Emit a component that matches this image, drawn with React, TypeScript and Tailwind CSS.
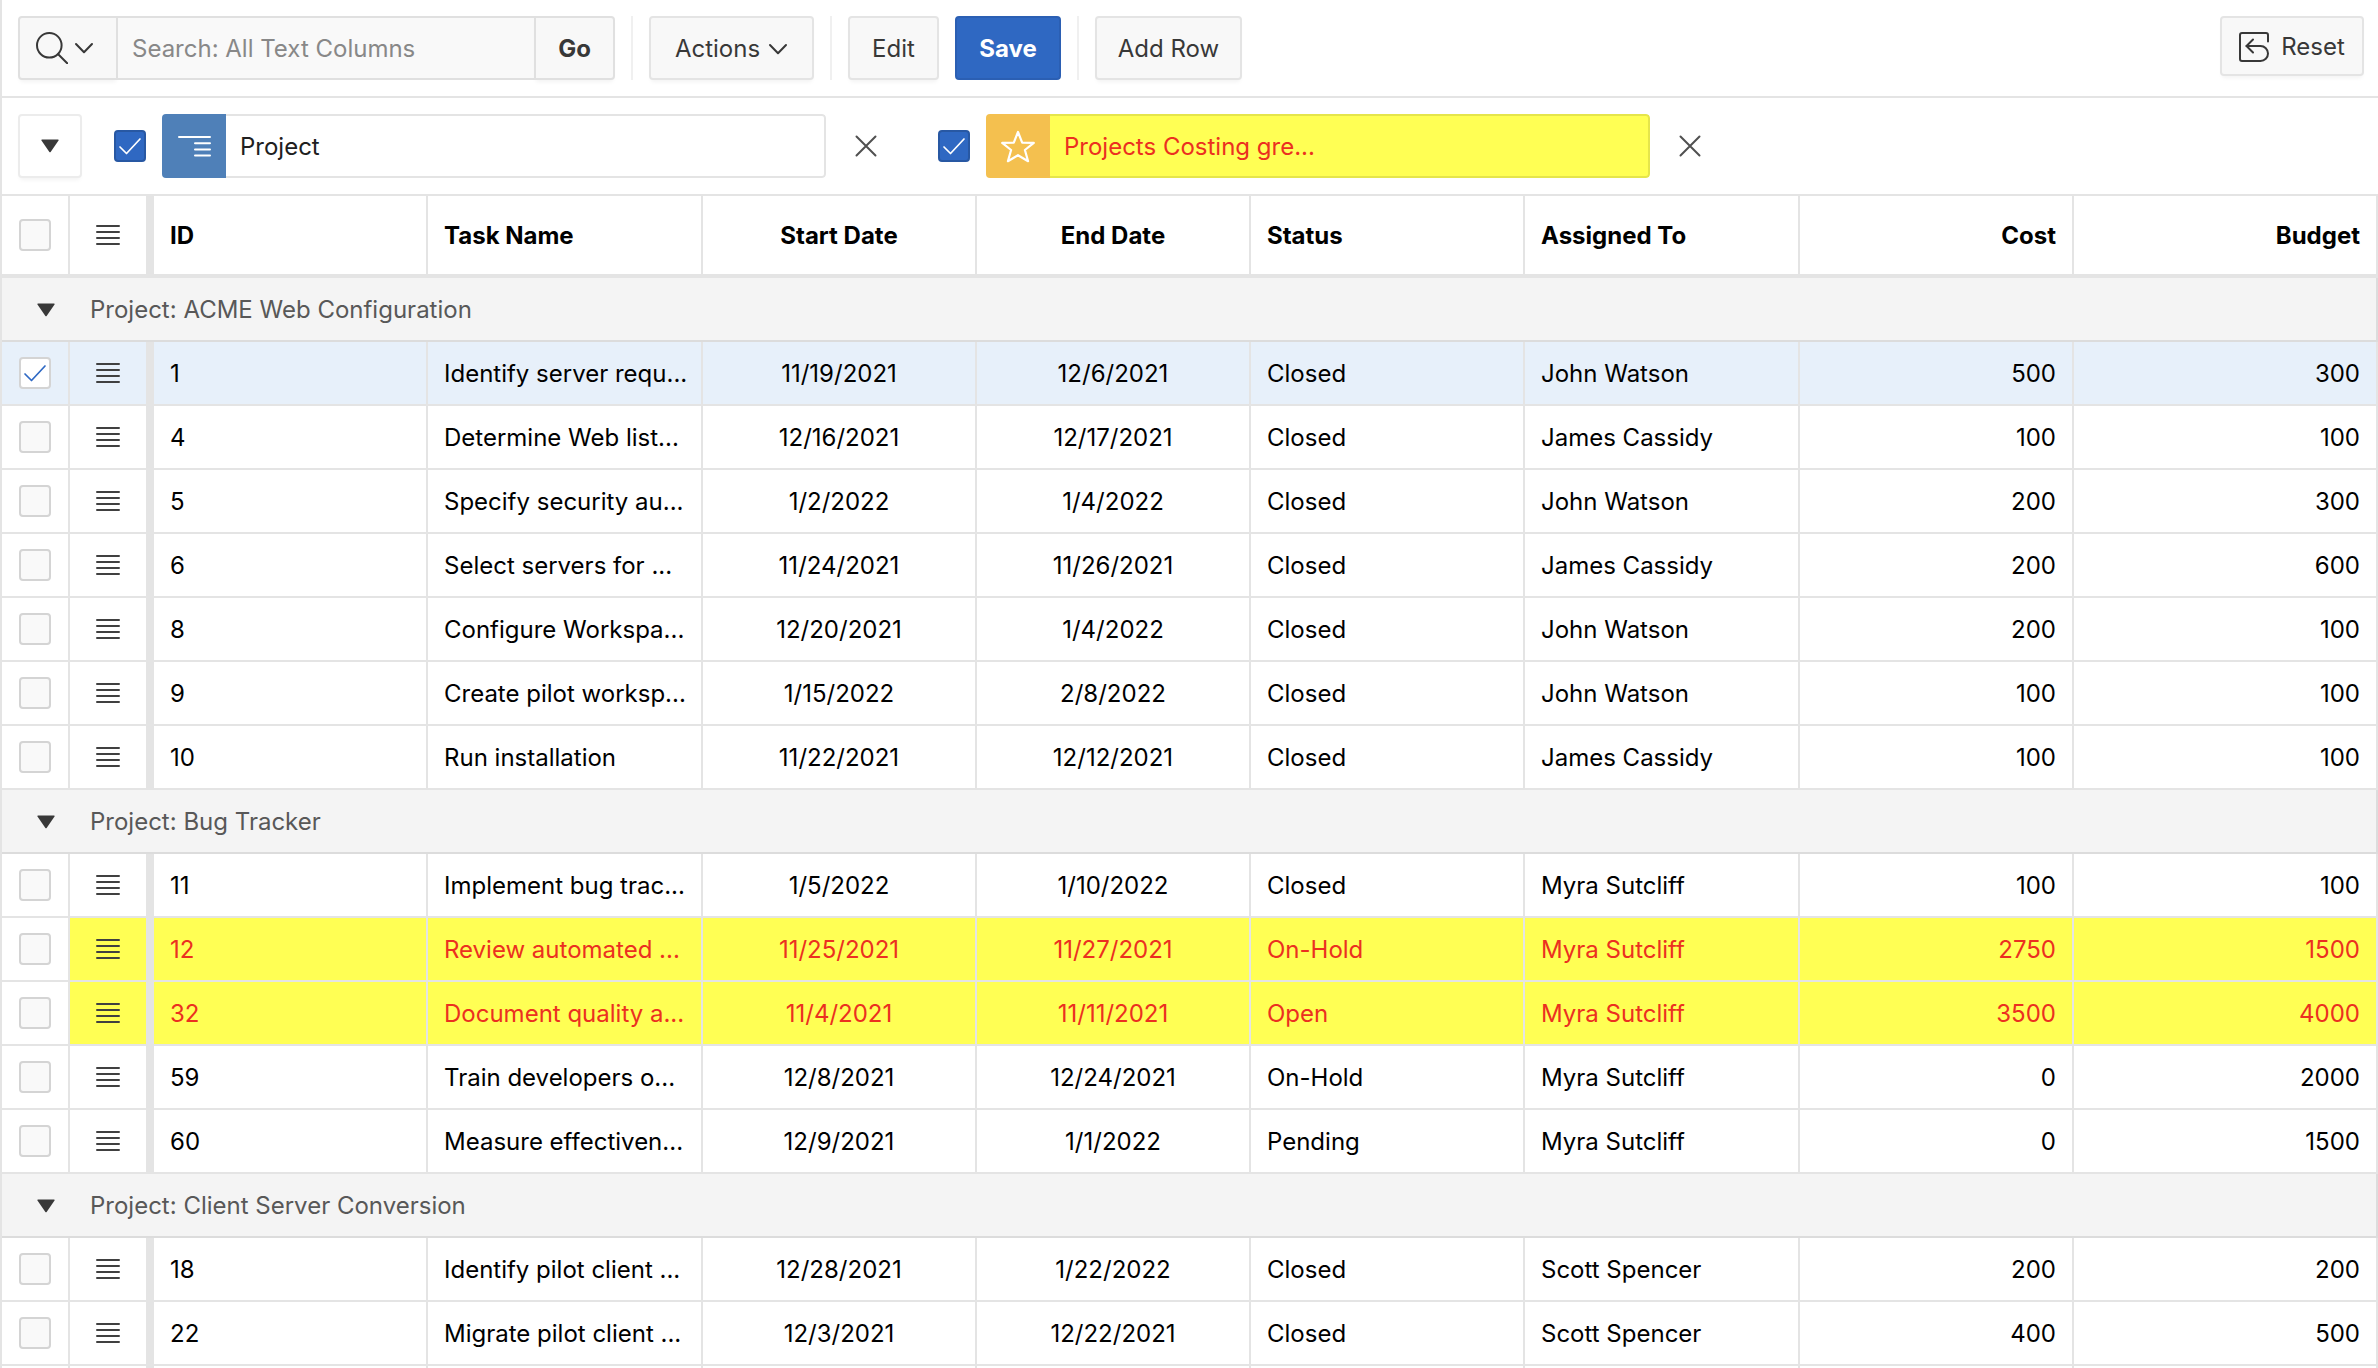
import React from "react";

type Task = {
  id: string;
  name: string;
  start: string;
  end: string;
  status: string;
  assignee: string;
  cost: string;
  budget: string;
  selected?: boolean;
  highlighted?: boolean;
};

const task = (
  id: string,
  name: string,
  start: string,
  end: string,
  status: string,
  assignee: string,
  cost: string,
  budget: string,
  flags: Partial<Task> = {},
): Task => ({ id, name, start, end, status, assignee, cost, budget, ...flags });

const groups: { project: string; tasks: Task[] }[] = [
  {
    project: "ACME Web Configuration",
    tasks: [
      task("1", "Identify server requ...", "11/19/2021", "12/6/2021", "Closed", "John Watson", "500", "300", { selected: true }),
      task("4", "Determine Web list...", "12/16/2021", "12/17/2021", "Closed", "James Cassidy", "100", "100"),
      task("5", "Specify security au...", "1/2/2022", "1/4/2022", "Closed", "John Watson", "200", "300"),
      task("6", "Select servers for ...", "11/24/2021", "11/26/2021", "Closed", "James Cassidy", "200", "600"),
      task("8", "Configure Workspa...", "12/20/2021", "1/4/2022", "Closed", "John Watson", "200", "100"),
      task("9", "Create pilot worksp...", "1/15/2022", "2/8/2022", "Closed", "John Watson", "100", "100"),
      task("10", "Run installation", "11/22/2021", "12/12/2021", "Closed", "James Cassidy", "100", "100"),
    ],
  },
  {
    project: "Bug Tracker",
    tasks: [
      task("11", "Implement bug trac...", "1/5/2022", "1/10/2022", "Closed", "Myra Sutcliff", "100", "100"),
      task("12", "Review automated ...", "11/25/2021", "11/27/2021", "On-Hold", "Myra Sutcliff", "2750", "1500", { highlighted: true }),
      task("32", "Document quality a...", "11/4/2021", "11/11/2021", "Open", "Myra Sutcliff", "3500", "4000", { highlighted: true }),
      task("59", "Train developers o...", "12/8/2021", "12/24/2021", "On-Hold", "Myra Sutcliff", "0", "2000"),
      task("60", "Measure effectiven...", "12/9/2021", "1/1/2022", "Pending", "Myra Sutcliff", "0", "1500"),
    ],
  },
  {
    project: "Client Server Conversion",
    tasks: [
      task("18", "Identify pilot client ...", "12/28/2021", "1/22/2022", "Closed", "Scott Spencer", "200", "200"),
      task("22", "Migrate pilot client ...", "12/3/2021", "12/22/2021", "Closed", "Scott Spencer", "400", "500"),
    ],
  },
];

const columns: { key: keyof Task; title: string; align: string; width: string }[] = [
  { key: "id", title: "ID", align: "text-left", width: "w-[274px]" },
  { key: "name", title: "Task Name", align: "text-left", width: "w-[275px]" },
  { key: "start", title: "Start Date", align: "text-center", width: "w-[274px]" },
  { key: "end", title: "End Date", align: "text-center", width: "w-[274px]" },
  { key: "status", title: "Status", align: "text-left", width: "w-[274px]" },
  { key: "assignee", title: "Assigned To", align: "text-left", width: "w-[275px]" },
  { key: "cost", title: "Cost", align: "text-right", width: "w-[274px]" },
  { key: "budget", title: "Budget", align: "text-right", width: "w-auto" },
];

const buttonStyle =
  "flex h-16 items-center rounded border-2 border-[#e4e4e4] bg-[#f8f8f8] pt-[2px] text-[#383838] shadow-[0_4px_4px_-2px_rgba(0,0,0,0.05)]";

function ChevronDown() {
  return (
    <svg width="20" height="12" viewBox="0 0 20 12" fill="none" stroke="currentColor" strokeWidth="2" strokeLinecap="round" strokeLinejoin="round" aria-hidden="true">
      <path d="M2 2l8 8.200 8-8.200" />
    </svg>
  );
}

function Triangle() {
  return (
    <svg width="18" height="14" viewBox="0 0 18 14" fill="#383838" aria-hidden="true">
      <path d="M1 .5h16a.7.7 0 0 1 .5 1L9.6 13a.8.8 0 0 1-1.2 0L.5 1.500A.7.7 0 0 1 1 .5z" />
    </svg>
  );
}

function Lines() {
  return (
    <svg width="26" height="22" viewBox="0 0 26 22" fill="none" stroke="#404040" strokeWidth="2" strokeLinecap="round" aria-hidden="true">
      <path d="M2 2h22M2 8h22M2 14h22M2 20h22" />
    </svg>
  );
}

function Cross() {
  return (
    <svg width="22" height="22" viewBox="0 0 22 22" fill="none" stroke="#505050" strokeWidth="2" strokeLinecap="round" aria-hidden="true">
      <path d="M1.500 1.500l19 19M20.500 1.500l-19 19" />
    </svg>
  );
}

function Tick({ className }: { className: string }) {
  return (
    <svg className={className} width="24" height="20" viewBox="0 0 24 20" fill="none" stroke="currentColor" strokeWidth="1.700" strokeLinecap="round" strokeLinejoin="round" aria-hidden="true">
      <path d="M2 11l6.500 6.500L22 3" />
    </svg>
  );
}

function RowCheckbox({ label, checked }: { label: string; checked?: boolean }) {
  return (
    <label className="mx-auto grid size-8 place-items-center">
      <input
        type="checkbox"
        aria-label={label}
        defaultChecked={checked}
        className="peer col-start-1 row-start-1 size-8 appearance-none rounded border-2 border-[#d4d4d4] bg-[#f9f9f9] checked:bg-white"
      />
      <Tick className="pointer-events-none col-start-1 row-start-1 hidden text-[#2f69c4] peer-checked:block" />
    </label>
  );
}

function SettingCheckbox({ label }: { label: string }) {
  return (
    <label className="grid size-8 shrink-0 place-items-center">
      <input
        type="checkbox"
        aria-label={label}
        defaultChecked
        className="peer col-start-1 row-start-1 size-8 appearance-none rounded border-2 border-[#d4d4d4] bg-[#f9f9f9] checked:border-[#2858a3] checked:bg-[#2f68c2]"
      />
      <Tick className="pointer-events-none col-start-1 row-start-1 hidden text-white peer-checked:block" />
    </label>
  );
}

function Separator() {
  return <div className="h-16 w-[2px] bg-[#f0f0f0]" />;
}

function Toolbar() {
  return (
    <div className="flex items-start gap-4 border-b-2 border-[#e4e4e4] p-4 pr-[14px] pb-4">
      <form className="flex h-16 w-[597px]" onSubmit={(e) => e.preventDefault()}>
        <button
          type="button"
          aria-label="Select columns to search"
          className="flex w-[100px] items-center gap-1.5 rounded-l border-2 border-[#e0e0e0] bg-[#f8f8f8] pl-4 text-[#383838] shadow-[0_4px_4px_-2px_rgba(0,0,0,0.05)]"
        >
          <svg width="32" height="32" viewBox="0 0 32 32" fill="none" stroke="currentColor" strokeWidth="2" strokeLinecap="round" aria-hidden="true">
            <circle cx="13.300" cy="13.300" r="12.300" />
            <path d="M22.200 22.200l9 9" />
          </svg>
          <ChevronDown />
        </button>
        <input
          type="text"
          aria-label="Search: All Text Columns"
          placeholder="Search: All Text Columns"
          className="min-w-0 flex-1 border-y-2 border-[#e0e0e0] bg-[#f9f9f9] px-[14px] pt-[2px] text-[#383838] placeholder:text-[#888888]"
        />
        <button
          type="submit"
          className="w-[81px] rounded-r border-2 border-[#e0e0e0] bg-[#f8f8f8] pt-[2px] font-bold text-[#383838] shadow-[0_4px_4px_-2px_rgba(0,0,0,0.05)]"
        >
          Go
        </button>
      </form>
      <Separator />
      <button type="button" className={`${buttonStyle} w-[165px] justify-center gap-2`}>
        Actions
        <ChevronDown />
      </button>
      <Separator />
      <button type="button" className={`${buttonStyle} w-[91px] justify-center`}>
        Edit
      </button>
      <button
        type="button"
        className="h-16 w-[106px] rounded border-2 border-[#2b5fb3] bg-[#2f68c2] pt-[2px] font-bold text-white"
      >
        Save
      </button>
      <Separator />
      <button type="button" className={`${buttonStyle} w-[147px] justify-center`}>
        Add Row
      </button>
      <button
        type="button"
        className="ml-auto flex h-[60px] w-36 items-center justify-center gap-3 rounded border-2 border-[#e4e4e4] bg-[#f8f8f8] pt-[2px] text-[#383838] shadow-[0_4px_4px_-2px_rgba(0,0,0,0.05)]"
      >
        <svg width="30" height="30" viewBox="0 0 30 30" fill="none" stroke="currentColor" strokeWidth="2" strokeLinecap="round" strokeLinejoin="round" aria-hidden="true">
          <path d="M29 9.500V3a2 2 0 0 0-2-2H3a2 2 0 0 0-2 2v24a2 2 0 0 0 2 2h18.500a7.500 7.500 0 0 0 0-15H7.500" />
          <path d="M14 7.500L7.500 14l6.500 6.500" />
        </svg>
        Reset
      </button>
    </div>
  );
}

function ReportSettings() {
  return (
    <div className="flex items-center border-b-2 border-[#e4e4e4] px-4 py-4">
      <button
        type="button"
        aria-label="Collapse report settings"
        className="mr-8 grid size-16 place-items-center rounded border-2 border-[#ececec] bg-white shadow-[0_4px_4px_-2px_rgba(0,0,0,0.05)]"
      >
        <Triangle />
      </button>
      <SettingCheckbox label="Enable control break on Project" />
      <button type="button" className="ml-4 flex h-16 w-[664px] items-center overflow-hidden rounded text-left text-[#202020]">
        <span className="grid size-16 shrink-0 place-items-center bg-[#4f80b8]">
          <svg width="34" height="26" viewBox="0 0 34 26" fill="none" stroke="white" strokeWidth="2" strokeLinecap="round" aria-hidden="true">
            <path d="M2 4h31M18 10.200h15M18 16.400h15M18 22.600h15" />
          </svg>
        </span>
        <span className="flex h-16 flex-1 items-center rounded-r border-2 border-l-0 border-[#e4e4e4] bg-white px-[14px] pt-[2px]">Project</span>
      </button>
      <button type="button" aria-label="Remove control break" className="mr-8 grid h-16 w-20 place-items-center">
        <Cross />
      </button>
      <SettingCheckbox label="Enable highlight" />
      <button type="button" className="ml-4 flex h-16 w-[664px] items-center overflow-hidden rounded text-left text-[#eb3020]">
        <span className="grid size-16 shrink-0 place-items-center bg-[#f4c04f]">
          <svg width="34" height="34" viewBox="0 0 34 34" fill="none" stroke="white" strokeWidth="2.200" strokeLinejoin="round" aria-hidden="true">
            <path d="M17 3L21.200 13.600L32.800 13.900L23.900 21L27.100 32.200L17 26.200L6.900 32.200L10.100 21L1.200 13.900L12.800 13.600Z" />
          </svg>
        </span>
        <span className="flex h-16 flex-1 items-center rounded-r border-2 border-l-0 border-[#e5e54b] bg-[#ffff54] px-[14px] pt-[2px]">Projects Costing gre...</span>
      </button>
      <button type="button" aria-label="Remove highlight" className="grid h-16 w-20 place-items-center">
        <Cross />
      </button>
    </div>
  );
}

function TaskRow({ row }: { row: Task }) {
  const tone = row.highlighted ? "bg-[#ffff54] text-[#eb3020]" : row.selected ? "bg-[#e7f0fa] text-black" : "bg-white text-black";
  return (
    <tr className="h-16">
      <td className={`border-r-2 border-b-2 border-[#e4e4e4] ${row.selected ? "bg-[#e7f0fa]" : "bg-white"}`}>
        <RowCheckbox label={`Select task ${row.id}`} checked={row.selected} />
      </td>
      <td className={`border-r-8 border-b-2 border-[#e4e4e4] ${tone}`}>
        <button type="button" aria-label={`Actions for task ${row.id}`} className="mx-auto block">
          <Lines />
        </button>
      </td>
      {columns.map((c) => (
        <td key={c.key} className={`overflow-hidden border-r-2 border-b-2 border-[#e4e4e4] px-4 pt-[2px] whitespace-nowrap ${c.align} ${tone}`}>
          {row[c.key]}
        </td>
      ))}
    </tr>
  );
}

function TaskGrid() {
  return (
    <table className="w-full table-fixed border-separate border-spacing-0">
      <colgroup>
        <col className="w-[68px]" />
        <col className="w-[84px]" />
        {columns.map((c) => (
          <col key={c.key} className={c.width} />
        ))}
      </colgroup>
      <thead>
        <tr className="h-[82px]">
          <th className="border-r-2 border-b-4 border-[#e4e4e4]">
            <RowCheckbox label="Select all tasks" />
          </th>
          <th className="border-r-8 border-b-4 border-[#e4e4e4]">
            <button type="button" aria-label="Selection actions" className="mx-auto block">
              <Lines />
            </button>
          </th>
          {columns.map((c) => (
            <th key={c.key} scope="col" className={`border-r-2 border-b-4 border-[#e4e4e4] px-4 pt-[2px] font-bold whitespace-nowrap text-black ${c.align}`}>
              {c.title}
            </th>
          ))}
        </tr>
      </thead>
      {groups.map((g) => (
        <tbody key={g.project}>
          <tr className="h-16">
            <th colSpan={10} scope="rowgroup" className="border-r-2 border-b-2 border-[#dcdcdc] bg-[#f4f4f4] pt-[2px] text-left font-normal text-[#585858]">
              <div className="flex items-center">
                <button type="button" aria-label={`Collapse ${g.project}`} className="grid h-8 w-[88px] place-items-center">
                  <Triangle />
                </button>
                Project: {g.project}
              </div>
            </th>
          </tr>
          {g.tasks.map((t) => (
            <TaskRow key={t.id} row={t} />
          ))}
        </tbody>
      ))}
      <tbody>
        <tr className="h-16">
          <td className="border-r-2 border-[#e4e4e4]" />
          <td className="border-r-8 border-[#e4e4e4]" />
          {columns.map((c) => (
            <td key={c.key} className="border-r-2 border-[#e4e4e4]" />
          ))}
        </tr>
      </tbody>
    </table>
  );
}

export default function App() {
  return (
    <main className="h-screen overflow-hidden border-l-2 border-[#e4e4e4] bg-white font-['Inter',sans-serif] text-[24px] leading-8">
      <Toolbar />
      <ReportSettings />
      <TaskGrid />
    </main>
  );
}
